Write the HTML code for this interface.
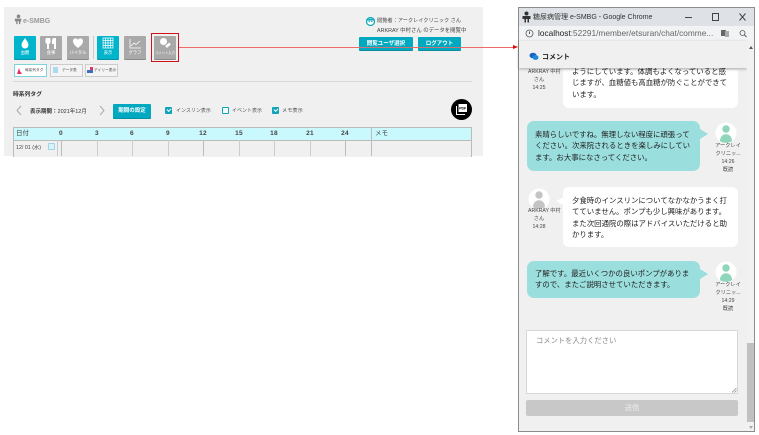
<!DOCTYPE html>
<html lang="ja"><head><meta charset="utf-8">
<style>
html,body{margin:0;padding:0;background:#fff}
body{width:759px;height:435px;position:relative;overflow:hidden;font-family:"Liberation Sans","Noto Sans CJK JP",sans-serif;color:#333}
.a{position:absolute;white-space:nowrap}
.b{position:absolute;width:22px;height:23px;background:#a9a9a9;border-radius:1px;box-shadow:0 1px 0 #8a8a8a;color:#fff;font-size:4.3px;text-align:center}
.b.on{background:#00b4cc;box-shadow:0 1px 0 #0a93a5}
.b span{position:absolute;left:-3px;right:-3px;top:14px;line-height:6px;white-space:nowrap}
.b svg{position:absolute;left:0;top:-1px}
.t{position:absolute;top:64px;height:11px;width:31px;background:#f4f4f4;border:1px solid #ccc;font-size:3.7px;line-height:11px;white-space:nowrap;color:#444}
.btn{position:absolute;background:#00a9c0;color:#fff;font-weight:bold;text-align:center;border-radius:1px;box-shadow:0 1px 0 #0b8da0;white-space:nowrap}
.chk{position:absolute;top:107px;width:5px;height:5px;border:1px solid #0fa4ba;background:#f4fbfc;border-radius:1px}
.chk.on{background:#0fa4ba}
.chk.on:after{content:"";position:absolute;left:1px;top:0;width:3px;height:2px;border-left:1px solid #fff;border-bottom:1px solid #fff;transform:rotate(-45deg)}
.h{position:absolute;top:130px;font-size:6.500px;line-height:8px;font-weight:bold;transform:translateX(-50%);color:#444;font-family:"Liberation Sans",sans-serif;letter-spacing:.3px}
.v{position:absolute;top:140px;height:16px;width:1px;background:#ccc}
.msg{position:absolute;font-size:7.400px;line-height:11.300px;color:#222;white-space:nowrap}
.l{left:563px;width:175px;background:#fff;border-radius:6px}
.r{left:527px;width:173px;background:#9adedd;border-radius:7px}
.meta{position:absolute;font-size:5.200px;line-height:8px;text-align:center;color:#444;white-space:nowrap}
.meta i{font-style:normal;position:relative;left:4px}
</style></head><body>

<!-- left panel -->
<div class="a" style="left:4px;top:7px;width:479px;height:149px;background:#f0f0f0"></div>

<svg class="a" style="left:13px;top:14px" width="11" height="11" viewBox="0 0 12 12"><circle cx="6" cy="2.500" r="2" fill="#888"/><path d="M2 5h7v3H8v3H6.500V8H5v3H3.500V8H2z" fill="#888"/></svg>
<div class="a" style="left:23px;top:18px;font-size:7px;font-weight:bold;color:#999">e-SMBG</div>

<div class="b on" style="left:14px;top:36px"><svg width="22" height="16" viewBox="0 0 22 16"><path d="M11 3C9 6 7.500 8 7.500 10a3.500 3.500 0 0 0 7 0C14.500 8 13 6 11 3z" fill="#fff"/></svg><span>血糖</span></div>
<div class="b" style="left:40px;top:36px"><svg width="22" height="16" viewBox="0 0 22 16"><path d="M6 3c-1 3-1 5 1 6v5h2V9c2-1 2-3 1-6zM13 3h3v11h-2v-5h-2c0-3 0-5 1-6z" fill="#fff"/></svg><span>食事</span></div>
<div class="b" style="left:67px;top:36px"><svg width="22" height="16" viewBox="0 0 22 16"><path d="M11 13C7 10 6 8 6 6c0-3 4-3.500 5-1 1-2.500 5-2 5 1 0 2-1 4-5 7z" fill="#fff"/></svg><span>バイタル</span></div>
<div class="a" style="left:93px;top:36px;width:1px;height:23px;background:#ccc"></div>
<div class="b on" style="left:97px;top:36px"><svg width="22" height="16" viewBox="0 0 22 16"><path d="M6 3h10v10H6zM8.500 3v10M11 3v10M13.500 3v10M6 5.500h10M6 8h10M6 10.500h10" fill="none" stroke="#fff" stroke-width=".7"/></svg><span>表示</span></div>
<div class="b" style="left:124px;top:36px"><svg width="22" height="16" viewBox="0 0 22 16"><path d="M6 4v9h11M7 11l3-3 2 1.500L16 6" fill="none" stroke="#fff" stroke-width=".8"/></svg><span>グラフ</span></div>
<div class="b" style="left:154px;top:36px"><svg width="22" height="16" viewBox="0 0 22 16"><circle cx="9.500" cy="6.500" r="3.500" fill="#fff"/><path d="M12 12l4-3.500" stroke="#fff" stroke-width="2.500"/></svg><span style="font-size:3.300px">コメント入力</span></div>
<div class="a" style="left:151px;top:33px;width:26px;height:27px;border:1px solid #d0121b"></div>

<!-- connector arrow -->
<div class="a" style="left:179px;top:47px;width:334px;height:1px;background:#ef6a6a"></div>
<div class="a" style="left:513px;top:45px;width:0;height:0;border-left:5px solid #e00c0c;border-top:2.500px solid transparent;border-bottom:2.500px solid transparent"></div>

<div class="t" style="left:14px;border-color:#7fd3dd;background:#fff"><span style="position:absolute;left:10px;top:0">時系列タグ</span><svg style="position:absolute;left:1px;top:2px" width="7" height="7"><path d="M1 7l2-6 1 3 2 3z" fill="#e0336a"/></svg></div>
<div class="t" style="left:50px"><span style="position:absolute;left:11px;top:0">データ表</span><i style="position:absolute;left:2px;top:2px;width:5px;height:6px;background:#a8dcee"></i></div>
<div class="t" style="left:85px"><span style="position:absolute;left:8px;top:0">デイリー表示</span><svg style="position:absolute;left:1px;top:2px" width="7" height="7"><rect x="0" y="3" width="3" height="3" fill="#3b6fc0"/><rect x="3" y="0" width="3" height="3" fill="#e0336a"/><rect x="3" y="3" width="3" height="3" fill="#3b6fc0"/></svg></div>

<div class="a" style="left:13px;top:81px;width:459px;height:1px;background:#d8d8d8"></div>
<div class="a" style="left:13px;top:89px;font-size:5.800px;font-weight:bold;color:#333">時系列タグ</div>

<svg class="a" style="left:15px;top:105px" width="8" height="11"><path d="M6 1L2 5.500 6 10" fill="none" stroke="#aaa"/></svg>
<div class="a" style="left:30px;top:107px;font-size:5.500px;color:#333"><b>表示期間：</b>2021年12月</div>
<svg class="a" style="left:98px;top:105px" width="8" height="11"><path d="M2 1l4 4.500L2 10" fill="none" stroke="#aaa"/></svg>
<div class="btn" style="left:113px;top:104px;width:38px;height:14px;font-size:5.500px;line-height:15px">期間の設定</div>

<div class="chk on" style="left:165px"></div><div class="a" style="left:176px;top:107px;font-size:5px;color:#555">インスリン表示</div>
<div class="chk" style="left:222px"></div><div class="a" style="left:232px;top:107px;font-size:5px;color:#555">イベント表示</div>
<div class="chk on" style="left:272px"></div><div class="a" style="left:282px;top:107px;font-size:5.200px;color:#555">メモ表示</div>

<div class="a" style="left:451px;top:99px;width:21px;height:21px;border-radius:50%;background:#000"></div>
<svg class="a" style="left:455px;top:103px" width="13" height="13"><path d="M3.500 1h8.500v8H3.500z" fill="#fff"/><path d="M1.500 3v8.500H10" fill="none" stroke="#fff"/><text x="4.200" y="6.500" font-size="3.500" font-weight="bold" font-family="Liberation Sans" fill="#000">PDF</text></svg>

<!-- table -->
<div class="a" style="left:13px;top:127px;width:457px;height:29px;border:1px solid #bbb;border-bottom:0;background:#f0f0f0"></div>
<div class="a" style="left:14px;top:128px;width:457px;height:12px;background:#c9f8fd;border-bottom:1px solid #bbb"></div>
<div class="a" style="left:16px;top:130px;font-size:6.500px;line-height:8px;color:#444">日付</div>
<div class="h" style="left:61px">0</div><div class="h" style="left:97px">3</div><div class="h" style="left:132px">6</div><div class="h" style="left:168px">9</div><div class="h" style="left:203px">12</div><div class="h" style="left:239px">15</div><div class="h" style="left:274px">18</div><div class="h" style="left:310px">21</div><div class="h" style="left:345px">24</div>
<div class="a" style="left:375px;top:130px;font-size:6.500px;line-height:8px;color:#444">メモ</div>
<div class="v" style="left:57px"></div><div class="v" style="left:61px;background:#bbb"></div><div class="v" style="left:97px"></div><div class="v" style="left:132px"></div><div class="v" style="left:168px"></div><div class="v" style="left:203px;background:#bbb"></div><div class="v" style="left:239px"></div><div class="v" style="left:274px"></div><div class="v" style="left:310px"></div><div class="v" style="left:345px;background:#bbb"></div><div class="v" style="left:371px;top:128px;height:28px;background:#bbb"></div>
<div class="a" style="left:16px;top:143px;font-size:5.300px;color:#444">12/ 01 (水)</div>
<div class="a" style="left:48px;top:143px;width:5px;height:5px;background:#d6f2fa;border:1px solid #9fd6e6;border-radius:1px"></div>

<!-- user info -->
<svg class="a" style="left:366px;top:17px" width="9" height="9"><circle cx="4.500" cy="4.500" r="4" fill="#fff" stroke="#0ba5bb" stroke-width="1.200"/><circle cx="3.200" cy="4.500" r=".7" fill="#0ba5bb"/><circle cx="5.800" cy="4.500" r=".7" fill="#0ba5bb"/><path d="M1 3.500C2 1 7 1 8 3.500z" fill="#0ba5bb"/></svg>
<div class="a" style="left:377px;top:17px;font-size:5.200px;color:#444">閲覧者：アークレイクリニック さん</div>
<div class="a" style="left:377px;top:26px;font-size:5.400px;color:#444">ARKRAY 中村さん のデータを閲覧中</div>
<div class="btn" style="left:359px;top:37px;width:54px;height:13px;font-size:5.500px;line-height:15px">閲覧ユーザ選択</div>
<div class="btn" style="left:418px;top:37px;width:43px;height:13px;font-size:5.500px;line-height:15px">ログアウト</div>
<div class="a" style="left:179px;top:47px;width:334px;height:1px;background:#ef6a6a;opacity:.85"></div>

<!-- browser window -->
<div class="a" style="left:518px;top:7px;width:237px;height:425px;border:1px solid #8c8c8c;box-sizing:border-box;background:#f0f0f0;overflow:hidden"></div>
<div class="a" style="left:519px;top:8px;width:235px;height:18px;background:#dee1e6"></div>
<div class="a" style="left:519px;top:26px;width:235px;height:15px;background:#f1f3f4;border-bottom:1px solid #dadce0"></div>
<svg class="a" style="left:521px;top:11px" width="11" height="12"><circle cx="5.500" cy="2.500" r="2" fill="#333"/><path d="M1.500 5h8v3h-1.500v3.500H6.500V8H5v3.500H3.500V8h-2z" fill="#333"/></svg>
<div class="a" style="left:533px;top:12px;font-size:7px;color:#333">糖尿病管理 e-SMBG - Google Chrome</div>
<svg class="a" style="left:680px;top:11px" width="70" height="12"><path d="M5 6.500h7" stroke="#444"/><rect x="32.500" y="2.500" width="6" height="7" fill="none" stroke="#444"/><path d="M59.500 2.500l6 7M65.500 2.500l-6 7" stroke="#444"/></svg>
<svg class="a" style="left:525px;top:29px" width="9" height="9"><circle cx="4.500" cy="4.500" r="3.500" fill="none" stroke="#555" stroke-width=".8"/><path d="M4.500 2.500v2.500" stroke="#555"/></svg>
<div class="a" style="left:538px;top:28px;font-size:8.300px;color:#666"><span style="color:#222">localhost</span>:52291/member/etsuran/chat/comme...</div>
<svg class="a" style="left:721px;top:29px" width="28" height="9"><rect x="0" y="1" width="5" height="6" fill="#666"/><rect x="4" y="2" width="4" height="6" fill="#aaa"/><circle cx="21.500" cy="4" r="2.500" fill="none" stroke="#555" stroke-width=".8"/><path d="M23.500 6l2 2" stroke="#555"/></svg>

<!-- messages -->
<div class="a" style="left:563px;top:70px;width:175px;height:38px;background:#fff;border-radius:0 0 6px 6px"></div>
<div class="msg" style="left:572px;top:66px">ようにしています。体調もよくなっていると感<br>じますが、血糖値も高血糖が防ぐことができて<br>います。</div>
<div class="meta" style="left:524px;top:68px;width:30px"><i>ARKRAY 中村</i><br>さん<br>14:25</div>

<div class="a r" style="top:121px;height:50px"></div>
<div class="a" style="left:700px;top:129px;width:0;height:0;border-left:8px solid #9adedd;border-top:5px solid transparent;border-bottom:5px solid transparent"></div>
<div class="msg" style="left:535px;top:129px">素晴らしいですね。無理しない程度に頑張って<br>ください。次来院されるときを楽しみにしてい<br>ます。お大事になさってください。</div>
<svg class="a" style="left:715px;top:122px" width="22" height="22"><circle cx="11" cy="11" r="10.500" fill="#fff"/><circle cx="11" cy="7" r="3.700" fill="#8fd6bb"/><path d="M5 19c0-9 12-9 12 0-3 2.500-9 2.500-12 0z" fill="#8fd6bb"/></svg>
<div class="meta" style="left:713px;top:142px;width:30px">アークレイ<br>クリニッ...<br>14:26<br>既読</div>

<div class="a l" style="top:187px;height:60px"></div>
<div class="a" style="left:556px;top:197px;width:0;height:0;border-right:8px solid #fff;border-top:4px solid transparent;border-bottom:4px solid transparent"></div>
<div class="msg" style="left:572px;top:195px">夕食時のインスリンについてなかなかうまく打<br>てていません。ポンプも少し興味があります。<br>また次回通院の際はアドバイスいただけると助<br>かります。</div>
<svg class="a" style="left:528px;top:188px" width="22" height="22"><circle cx="11" cy="11" r="10.500" fill="#fff"/><circle cx="11" cy="7" r="3.700" fill="#c4c4c4"/><path d="M5 19c0-9 12-9 12 0-3 2.500-9 2.500-12 0z" fill="#c4c4c4"/></svg>
<div class="meta" style="left:524px;top:207px;width:30px"><i>ARKRAY 中村</i><br>さん<br>14:28</div>

<div class="a r" style="top:261px;height:37px"></div>
<div class="a" style="left:700px;top:269px;width:0;height:0;border-left:8px solid #9adedd;border-top:5px solid transparent;border-bottom:5px solid transparent"></div>
<div class="msg" style="left:535px;top:268px">了解です。最近いくつかの良いポンプがありま<br>すので、またご説明させていただきます。</div>
<svg class="a" style="left:715px;top:261px" width="22" height="22"><circle cx="11" cy="11" r="10.500" fill="#fff"/><circle cx="11" cy="7" r="3.700" fill="#8fd6bb"/><path d="M5 19c0-9 12-9 12 0-3 2.500-9 2.500-12 0z" fill="#8fd6bb"/></svg>
<div class="meta" style="left:713px;top:281px;width:30px">アークレイ<br>クリニッ...<br>14:29<br>既読</div>

<!-- comment header -->
<div class="a" style="left:519px;top:41px;width:228px;height:27px;background:#f0f0f0;box-shadow:0 1px 3px rgba(0,0,0,.3)"></div>
<svg class="a" style="left:529px;top:52px" width="10" height="9"><ellipse cx="4" cy="3.500" rx="3.500" ry="2.800" fill="#1565c0"/><ellipse cx="6.500" cy="5.500" rx="3" ry="2.400" fill="#1e88d8"/></svg>
<div class="a" style="left:542px;top:52px;font-size:7px;font-weight:bold;color:#222">コメント</div>

<!-- input -->
<div class="a" style="left:526px;top:330px;width:212px;height:64px;background:#fff;border:1px solid #d8d8d8;box-sizing:border-box"></div>
<div class="a" style="left:536px;top:336px;font-size:7.300px;color:#8a8a8a">コメントを入力ください</div>
<svg class="a" style="left:731px;top:387px" width="6" height="6"><path d="M1 5.500L5.500 1M3.500 5.500l2-2" stroke="#777" stroke-width=".6"/></svg>
<div class="a" style="left:526px;top:400px;width:212px;height:16px;background:#c8c8c8;border-radius:2px;color:#eee;font-size:7.300px;line-height:16px;text-align:center">送信</div>

<!-- scrollbar -->
<div class="a" style="left:747px;top:41px;width:7px;height:390px;background:#f1f1f1"></div>
<div class="a" style="left:747px;top:343px;width:7px;height:79px;background:#c1c1c1"></div>
<div class="a" style="left:748.500px;top:46px;width:0;height:0;border-left:2px solid transparent;border-right:2px solid transparent;border-bottom:3px solid #555"></div>
<div class="a" style="left:748.500px;top:426px;width:0;height:0;border-left:2px solid transparent;border-right:2px solid transparent;border-top:3px solid #aaa"></div>
</body></html>
